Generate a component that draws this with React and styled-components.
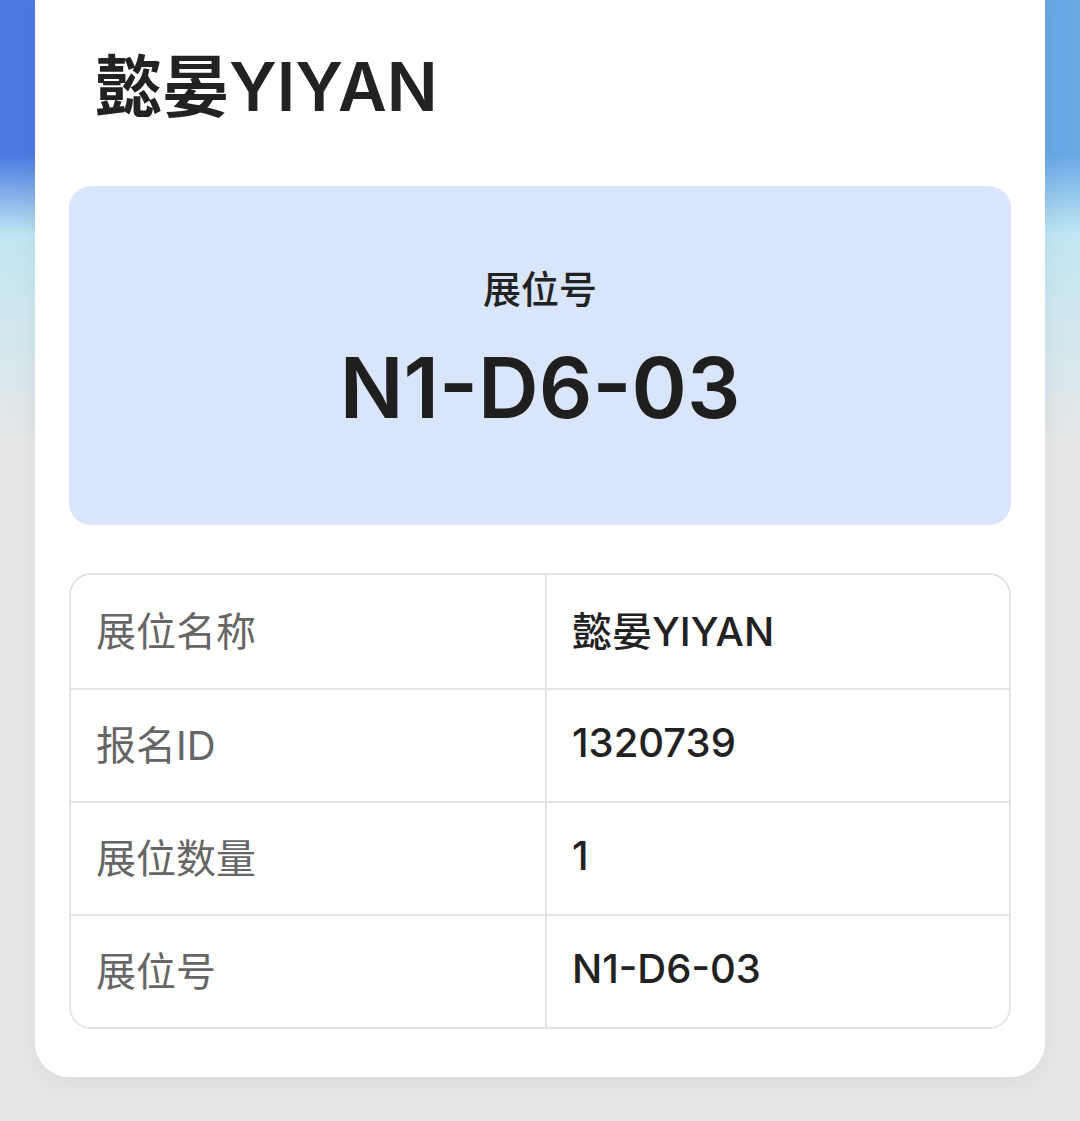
import styled, { createGlobalStyle } from "styled-components";

const GlobalStyle = createGlobalStyle`
  html, body {
    margin: 0;
    padding: 0;
  }

  body {
    min-height: 100vh;
    font-family: "Inter", "Noto Sans CJK SC", sans-serif;
    background:
      linear-gradient(180deg, rgba(231, 231, 231, 0) 230px, #e7e7e7 450px),
      linear-gradient(180deg, rgba(192, 232, 244, 0) 155px, #bfe7f3 235px),
      linear-gradient(90deg, #4a7ae0, #6aa8e6);
    background-repeat: no-repeat;
    background-color: #e7e7e7;
  }
`;

const Page = styled.div`
  padding: 0 35px 44px;
`;

const Card = styled.section`
  margin-top: -40px;
  padding: 84px 34px 48px;
  background: #fff;
  border-radius: 34px;
  box-shadow: 0 10px 28px rgba(0, 0, 0, 0.05);
`;

const Title = styled.h1`
  margin: 0 0 56px;
  padding-left: 26px;
  font-size: 67px;
  line-height: 86px;
  font-weight: 600;
  color: #222;
`;

const BoothBox = styled.div`
  height: 339px;
  border-radius: 22px;
  background: #d9e5fb;
  display: flex;
  flex-direction: column;
  align-items: center;
  justify-content: center;
  gap: 30px;
  padding-bottom: 10px;
  box-sizing: border-box;
`;

const BoothLabel = styled.div`
  font-size: 38px;
  font-weight: 500;
  color: #222;
  line-height: 1.2;
`;

const BoothNumber = styled.div`
  font-size: 84px;
  font-weight: 600;
  color: #1f1f1f;
  line-height: 1.1;
`;

const Table = styled.div`
  margin-top: 48px;
  border: 2px solid #e4e4e4;
  border-radius: 22px;
  overflow: hidden;
`;

const Row = styled.div`
  display: grid;
  grid-template-columns: 474px 1fr;
  height: 113px;
  border-top: ${(p) => (p.$first ? "none" : "2px solid #e4e4e4")};
  box-sizing: border-box;
`;

const Cell = styled.div`
  display: flex;
  align-items: center;
  padding-left: 25px;
  font-size: 40px;
  font-weight: ${(p) => (p.$value ? 500 : 400)};
  color: ${(p) => (p.$value ? "#222" : "#666")};
  border-left: ${(p) => (p.$value ? "2px solid #e4e4e4" : "none")};
  padding-bottom: 6px;
`;

const rows = [
  ["展位名称", "懿晏YIYAN"],
  ["报名ID", "1320739"],
  ["展位数量", "1"],
  ["展位号", "N1-D6-03"],
];

export default function App() {
  return (
    <>
      <GlobalStyle />
      <Page>
        <Card>
          <Title>懿晏YIYAN</Title>
          <BoothBox>
            <BoothLabel>展位号</BoothLabel>
            <BoothNumber>N1-D6-03</BoothNumber>
          </BoothBox>
          <Table>
            {rows.map(([label, value], i) => (
              <Row key={label} $first={i === 0}>
                <Cell>{label}</Cell>
                <Cell $value>{value}</Cell>
              </Row>
            ))}
          </Table>
        </Card>
      </Page>
    </>
  );
}
